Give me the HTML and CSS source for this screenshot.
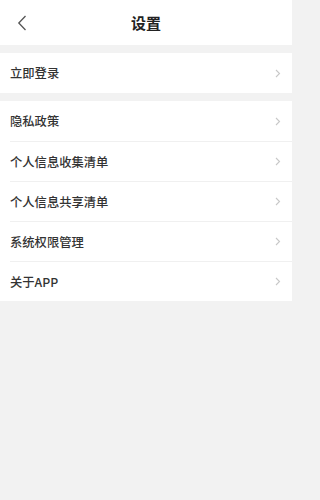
FILE: index.html
```html
<!DOCTYPE html>
<html lang="zh-CN">
<head>
<meta charset="utf-8">
<link rel="stylesheet" href="styles.css">
</head>
<body>
<div class="page">
  <header class="nav">
    <svg class="back" width="10" height="16" viewBox="0 0 10 16"><path d="M8.5 1 L1.8 8 L8.5 15" fill="none" stroke="#555" stroke-width="1.3"/></svg>
    <h1 class="title">设置</h1>
  </header>
  <div class="group">
    <div class="row"><span class="label">立即登录</span><svg class="chev" width="6" height="9" viewBox="0 0 6 9"><path d="M1 1 L4.5 4.5 L1 8" fill="none" stroke="#c8c8c8" stroke-width="1.1"/></svg></div>
  </div>
  <div class="group">
    <div class="row"><span class="label">隐私政策</span><svg class="chev" width="6" height="9" viewBox="0 0 6 9"><path d="M1 1 L4.5 4.5 L1 8" fill="none" stroke="#c8c8c8" stroke-width="1.1"/></svg></div>
    <div class="row"><span class="label">个人信息收集清单</span><svg class="chev" width="6" height="9" viewBox="0 0 6 9"><path d="M1 1 L4.5 4.5 L1 8" fill="none" stroke="#c8c8c8" stroke-width="1.1"/></svg></div>
    <div class="row"><span class="label">个人信息共享清单</span><svg class="chev" width="6" height="9" viewBox="0 0 6 9"><path d="M1 1 L4.5 4.5 L1 8" fill="none" stroke="#c8c8c8" stroke-width="1.1"/></svg></div>
    <div class="row"><span class="label">系统权限管理</span><svg class="chev" width="6" height="9" viewBox="0 0 6 9"><path d="M1 1 L4.5 4.5 L1 8" fill="none" stroke="#c8c8c8" stroke-width="1.1"/></svg></div>
    <div class="row"><span class="label">关于APP</span><svg class="chev" width="6" height="9" viewBox="0 0 6 9"><path d="M1 1 L4.5 4.5 L1 8" fill="none" stroke="#c8c8c8" stroke-width="1.1"/></svg></div>
  </div>
</div>
</body>
</html>
```
FILE: styles.css
```css
html, body {
  margin: 0;
  padding: 0;
  background: #f2f2f2;
  font-family: "Noto Sans CJK SC", "Noto Sans", sans-serif;
}
.page {
  width: 292px;
  min-height: 500px;
  background: #f2f2f2;
}
.nav {
  height: 45px;
  background: #fff;
  display: flex;
  align-items: center;
  justify-content: center;
  position: relative;
}
.back {
  position: absolute;
  left: 17px;
  top: 15px;
}
.title {
  margin: 0;
  font-size: 15px;
  font-weight: 700;
  color: #222;
  line-height: 1;
}
.group {
  background: #fff;
  margin-top: 8px;
  padding-left: 10px;
}
.row {
  height: 40px;
  display: flex;
  align-items: center;
  justify-content: space-between;
  padding-right: 11px;
  border-top: 1px solid #f0f0f0;
  box-sizing: border-box;
}
.row:first-child {
  border-top: none;
}
.label {
  font-size: 12.3px;
  font-weight: 500;
  color: #333;
}
.chev {
  display: block;
}
```
